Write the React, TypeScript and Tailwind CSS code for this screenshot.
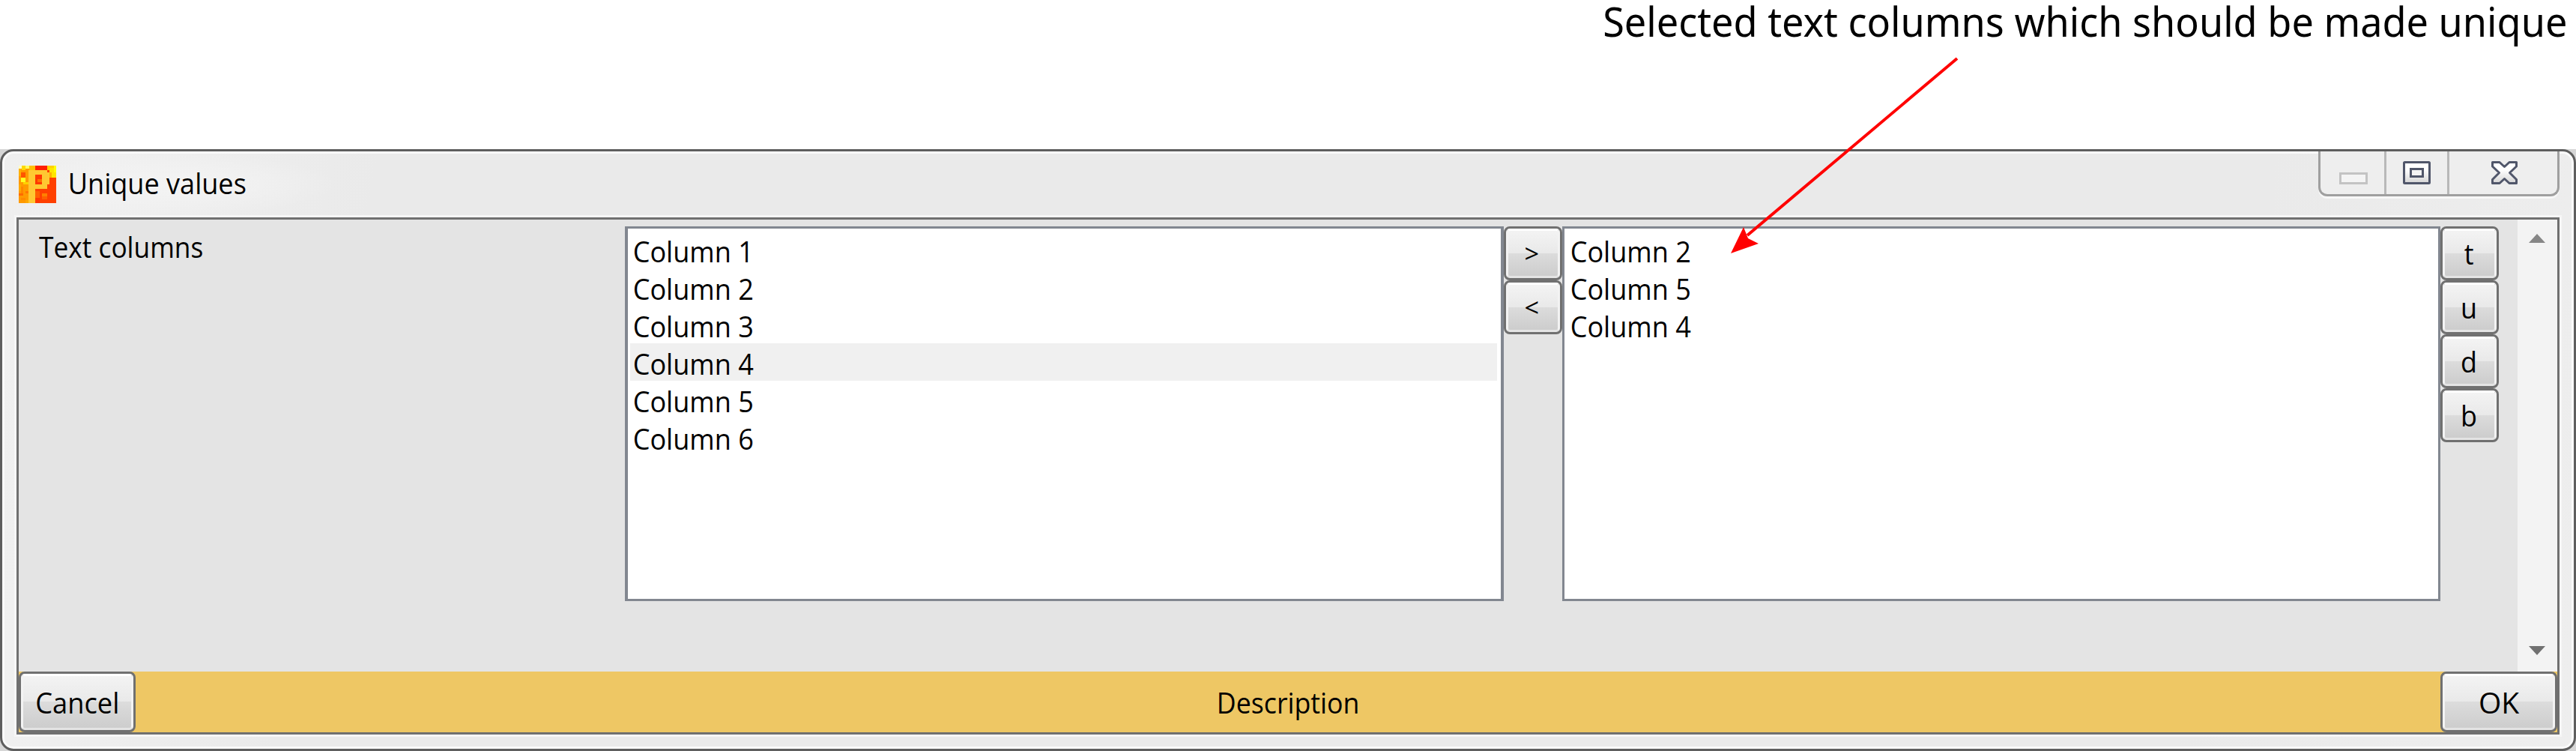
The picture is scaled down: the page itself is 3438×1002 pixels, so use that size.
import type { ReactNode } from "react";
import clsx from "clsx";

const availableColumns = ["Column 1", "Column 2", "Column 3", "Column 4", "Column 5", "Column 6"];
const selectedColumns = ["Column 2", "Column 5", "Column 4"];

function AppIcon() {
  const cells: [number, number, number, number, string][] = [
    [0, 0, 50, 50, "#ff4000"],
    [0, 0, 14, 50, "#ff9a00"],
    [0, 0, 4, 4, "#ffffc0"],
    [4, 0, 5, 6, "#ffd800"],
    [9, 0, 5, 4, "#ffff60"],
    [14, 0, 8, 6, "#ffc000"],
    [22, 0, 16, 6, "#ff2000"],
    [0, 4, 3, 10, "#ffb000"],
    [3, 9, 6, 7, "#ff5500"],
    [3, 16, 6, 6, "#ffff20"],
    [6, 22, 7, 3, "#ffd000"],
    [0, 25, 3, 9, "#ffa800"],
    [3, 28, 3, 9, "#ff8600"],
    [0, 37, 6, 3, "#ff6a00"],
    [9, 34, 4, 3, "#ff7800"],
    [3, 43, 6, 3, "#ff8a00"],
    [9, 46, 4, 4, "#ffa800"],
    [38, 0, 12, 6, "#ffd000"],
    [41, 3, 9, 13, "#ffe400"],
    [47, 0, 3, 9, "#ffff00"],
    [41, 9, 3, 7, "#ffb000"],
    [22, 34, 6, 16, "#ff6000"],
    [31, 37, 7, 4, "#ff8000"],
    [31, 41, 7, 4, "#ff6000"],
    [22, 43, 6, 7, "#ff3800"],
    [13, 6, 9, 44, "#ffc832"],
    [22, 6, 16, 6, "#ffc832"],
    [31, 9, 10, 16, "#ffc832"],
    [22, 25, 16, 6, "#ffc832"],
    [22, 12, 9, 13, "#ff3800"],
    [25, 18, 6, 4, "#ff7000"],
  ];
  return (
    <svg width="50" height="50" viewBox="0 0 50 50" shapeRendering="crispEdges" className="shrink-0">
      {cells.map(([x, y, w, h, fill], i) => (
        <rect key={i} x={x} y={y} width={w} height={h} fill={fill} />
      ))}
    </svg>
  );
}

function WindowControls() {
  return (
    <div className="-mt-[3px] mr-[3px] flex h-[60px] w-[322px] rounded-b-[12px] border-[3px] border-t-0 border-[#9f9f9f] bg-[#eeeeee] shadow-[0_3px_0_0_#f7f7f7]">
      <div className="h-full w-[85px]">
        <svg width="85" height="57">
          <rect x="26.5" y="29.5" width="35" height="13" fill="#f4f4f4" stroke="#c3c3c3" strokeWidth="3" />
        </svg>
      </div>
      <div className="h-full w-[84px] border-l-[3px] border-[#b8b8b8]">
        <svg width="81" height="57">
          <defs>
            <linearGradient id="glyph" x1="0" y1="0" x2="0" y2="1">
              <stop offset="0.35" stopColor="#ffffff" />
              <stop offset="1" stopColor="#d4d4d4" />
            </linearGradient>
          </defs>
          <rect x="23.5" y="14.5" width="34" height="28" rx="1" fill="url(#glyph)" stroke="#50566a" strokeWidth="3" />
          <rect x="32.5" y="23.5" width="16" height="10" fill="#f4f4f4" stroke="#50566a" strokeWidth="3" />
        </svg>
      </div>
      <div className="h-full flex-1 border-l-[3px] border-[#b8b8b8]">
        <svg width="144" height="57">
          <path
            d="M57.5 14.5H67L73.500 20.500 80 14.500H89.500V20L80.500 28.500 89.500 37.500V42.500H80L73.500 36.500 67 42.500H57.500V37.500L66.500 28.500 57.500 20Z"
            fill="url(#glyph)"
            stroke="#50566a"
            strokeWidth="3"
            strokeLinejoin="round"
          />
        </svg>
      </div>
    </div>
  );
}

function PushButton({ children, className }: { children: ReactNode; className?: string }) {
  return (
    <button
      className={clsx(
        "flex shrink-0 items-center justify-center rounded-[8px] border-[3px] border-[#707070] bg-[#707070]",
        className,
      )}
    >
      <span className="flex h-full w-full items-center justify-center rounded-[5px] border-[3px] border-t-white border-r-[#f3f3f3] border-b-[#e4e4e4] border-l-[#f3f3f3] bg-[linear-gradient(#f3f3f3,#e9e9e9_50%,#dcdcdc_50%,#cdcdcd)] pt-px">
        {children}
      </span>
    </button>
  );
}

function SmallButton({ children, glyphClass }: { children: ReactNode; glyphClass?: string }) {
  return (
    <PushButton className="h-[72px] w-[78px]">
      <span className={clsx("pr-[3px]", glyphClass ?? "scale-x-[0.92]")}>{children}</span>
    </PushButton>
  );
}

function ColumnList({ items, highlighted, className }: { items: string[]; highlighted?: number; className: string }) {
  return (
    <ul className={clsx("h-[500px] shrink-0 border-y-[3px] border-[#828790] bg-white pt-[3px]", className)}>
      {items.map((item, i) => (
        <li key={item} className={clsx("h-[50px] leading-[53px]", i === highlighted && "bg-[#f0f0f0]")}>
          <span className="inline-block origin-left scale-x-[0.925] pl-1">{item}</span>
        </li>
      ))}
    </ul>
  );
}

function ScrollBar() {
  return (
    <div className="flex w-[53px] shrink-0 flex-col items-center justify-between bg-[#f3f3f3] pt-[19px] pr-px pb-[22px]">
      <svg width="22" height="12">
        <path d="M0 12L11 0 22 12Z" fill="#868686" />
      </svg>
      <svg width="22" height="12">
        <path d="M0 0H22L11 12Z" fill="#707070" />
      </svg>
    </div>
  );
}

export default function App() {
  return (
    <div className="relative flex h-[1002px] w-[3438px] flex-col overflow-hidden bg-white font-['Open_Sans',sans-serif] text-[39px] text-black">
      <p className="h-[199px] pr-[12px] text-right font-['Noto_Sans',sans-serif] text-[55px] leading-[55px] whitespace-nowrap">
        <span className="inline-block origin-right scale-x-[0.949]">Selected text columns which should be made unique</span>
      </p>

      <div className="h-[803px] bg-[#d6d6d6]">
        <div className="h-full rounded-[18px] border-[3px] border-[#5e5e5e] bg-[#5e5e5e]">
          <div className="flex h-full flex-col rounded-[15px] border-[3px] border-[#fafafa] bg-[linear-gradient(100deg,#efefef,#f0f0f0_4%,#eaeaea_14%,#eaeaea_85%,#eeeeee)] px-[13px] pb-[13px]">
            <header className="flex h-[82px] shrink-0 justify-between">
              <div className="flex w-[430px] bg-[radial-gradient(closest-side,#f4f4f4,transparent)] pt-[16px] pl-[6px]">
                <AppIcon />
                <h1 className="origin-left scale-x-[0.925] pl-[17px] leading-[45px] whitespace-nowrap">Unique values</h1>
              </div>
              <WindowControls />
            </header>

            <div className="flex-1 border-[3px] border-[#f6f6f6]">
              <div className="flex h-full flex-col border-[3px] border-[#707070] bg-[#e4e4e4]">
                <main className="flex h-[603px] shrink-0">
                  <label className="w-[809px] shrink-0 pl-[27px] leading-[71px]">
                    <span className="inline-block origin-left scale-x-[0.905]">Text columns</span>
                  </label>
                  <div className="flex pt-[9px]">
                    <ColumnList items={availableColumns} highlighted={3} className="w-[1173px] border-x-4 pr-[5px] pl-[3px]" />
                    <div className="flex flex-col">
                      <SmallButton glyphClass="scale-[0.88]">&gt;</SmallButton>
                      <SmallButton glyphClass="scale-[0.88]">&lt;</SmallButton>
                    </div>
                    <ColumnList items={selectedColumns} className="w-[1172px] border-x-[3px] pr-[5px] pl-1" />
                    <div className="flex flex-col">
                      {["t", "u", "d", "b"].map((key) => (
                        <SmallButton key={key}>{key}</SmallButton>
                      ))}
                    </div>
                  </div>
                  <div className="flex-1" />
                  <ScrollBar />
                </main>
                <footer className="flex flex-1 items-stretch justify-between bg-[#eec764]">
                  <PushButton className="w-[156px]">
                    <span className="scale-x-[0.93]">Cancel</span>
                  </PushButton>
                  <p className="scale-x-[0.915] self-center pt-[2px]">Description</p>
                  <PushButton className="w-[156px]">OK</PushButton>
                </footer>
              </div>
            </div>
          </div>
        </div>
      </div>

      <svg className="pointer-events-none absolute top-[70px] left-[2300px]" width="320" height="275">
        <path d="M312 8L32 244" stroke="#ff0000" strokeWidth="4" />
        <path d="M10 268L27 233 33 248 47 255Z" fill="#ff0000" />
      </svg>
    </div>
  );
}
